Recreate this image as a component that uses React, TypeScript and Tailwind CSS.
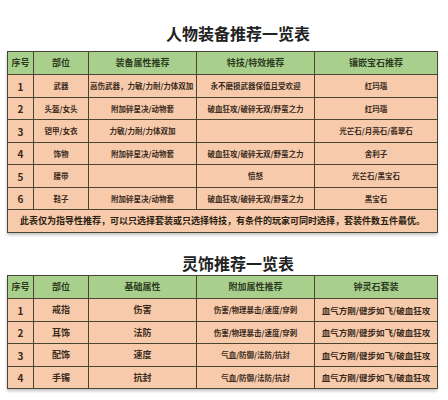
const font = { fontFamily: '"Noto Sans CJK SC", "Microsoft YaHei", sans-serif' };

type Cell = { text: string; left?: boolean };

const gear: Cell[][] = [
  [{ text: "1" }, { text: "武器" }, { text: "高伤武器，力敏/力耐/力体双加", left: true }, { text: "永不磨损武器保值且受欢迎" }, { text: "红玛瑙" }],
  [{ text: "2" }, { text: "头盔/女头" }, { text: "附加碎星决/动物套" }, { text: "破血狂攻/破碎无双/野蛮之力" }, { text: "红玛瑙" }],
  [{ text: "3" }, { text: "铠甲/女衣" }, { text: "力敏/力耐/力体双加" }, { text: "" }, { text: "光芒石/月亮石/翡翠石" }],
  [{ text: "4" }, { text: "饰物" }, { text: "附加碎星决/动物套" }, { text: "破血狂攻/破碎无双/野蛮之力" }, { text: "舍利子" }],
  [{ text: "5" }, { text: "腰带" }, { text: "" }, { text: "愤怒" }, { text: "光芒石/黑宝石" }],
  [{ text: "6" }, { text: "鞋子" }, { text: "附加碎星决/动物套" }, { text: "破血狂攻/破碎无双/野蛮之力" }, { text: "黑宝石" }],
];

const ling: string[][] = [
  ["1", "戒指", "伤害", "伤害/物理暴击/速度/穿刺", "血气方刚/健步如飞/破血狂攻"],
  ["2", "耳饰", "法防", "伤害/物理暴击/速度/穿刺", "血气方刚/健步如飞/破血狂攻"],
  ["3", "配饰", "速度", "气血/防御/法防/抗封", "血气方刚/健步如飞/破血狂攻"],
  ["4", "手镯", "抗封", "气血/防御/法防/抗封", "血气方刚/健步如飞/破血狂攻"],
];

function Cols() {
  return (
    <colgroup>
      <col className="w-[26px]" />
      <col className="w-[55px]" />
      <col className="w-[108px]" />
      <col className="w-[118px]" />
      <col className="w-[123px]" />
    </colgroup>
  );
}

function Head({ labels }: { labels: string[] }) {
  return (
    <tr className="h-[23px] bg-[#a8d08c]">
      {labels.map((l) => (
        <th key={l} className="border border-[#4a4433] text-[9px] font-bold text-[#2e3a22] text-center p-0 whitespace-nowrap">
          {l}
        </th>
      ))}
    </tr>
  );
}

export default function App() {
  return (
    <div className="w-[448px] h-[400px] bg-white overflow-hidden" style={font}>
      <h1 className="pt-[22px] h-[45px] leading-[23px] text-[16px] font-bold text-[#222] text-center pl-[28px]">
        人物装备推荐一览表
      </h1>
      <div className="mt-[6px] ml-[7px] w-[430px] shadow-[0_2px_3px_rgba(0,0,0,0.25)]">
        <table className="w-[430px] table-fixed border-collapse border border-[#6b6458]">
          <Cols />
          <thead>
            <Head labels={["序号", "部位", "装备属性推荐", "特技/特效推荐", "镶嵌宝石推荐"]} />
          </thead>
          <tbody className="bg-[#f6caab] text-[#3b2a1c]">
            {gear.map((row, i) => (
              <tr key={i} className={i % 2 === 0 ? "h-[23px]" : "h-[22px]"}>
                {row.map((c, j) => (
                  <td
                    key={j}
                    className={`border border-[#4a4433] p-0 whitespace-nowrap overflow-hidden ${
                      j === 0 ? "text-[10px] font-bold text-center" : c.left ? "text-[7.5px] font-bold text-left pl-[1px]" : "text-[7.5px] font-bold text-center"
                    }`}
                  >
                    {c.text}
                  </td>
                ))}
              </tr>
            ))}
            <tr className="h-[23px]">
              <td colSpan={5} className="border border-[#4a4433] p-0 text-center text-[9px] font-bold text-[#2b1d10] whitespace-nowrap">
                此表仅为指导性推荐，可以只选择套装或只选择特技，有条件的玩家可同时选择，套装件数五件最优。
              </td>
            </tr>
          </tbody>
        </table>
      </div>
      <h2 className="mt-[19px] h-[23px] leading-[23px] text-[16px] font-bold text-[#222] text-center pl-[28px]">
        灵饰推荐一览表
      </h2>
      <div className="ml-[7px] w-[430px] shadow-[0_2px_3px_rgba(0,0,0,0.25)]">
        <table className="w-[430px] table-fixed border-collapse border border-[#6b6458]">
          <Cols />
          <thead>
            <Head labels={["序号", "部位", "基础属性", "附加属性推荐", "钟灵石套装"]} />
          </thead>
          <tbody className="bg-[#f6caab] text-[#3b2a1c]">
            {ling.map((row, i) => (
              <tr key={i} className={i % 2 === 0 ? "h-[23px]" : "h-[22px]"}>
                {row.map((t, j) => (
                  <td
                    key={j}
                    className={`border border-[#4a4433] p-0 text-center whitespace-nowrap overflow-hidden font-bold ${
                      j === 0 ? "text-[10px]" : j < 3 ? "text-[9px]" : j === 3 ? "text-[7.5px]" : "text-[8.5px]"
                    }`}
                  >
                    {t}
                  </td>
                ))}
              </tr>
            ))}
          </tbody>
        </table>
      </div>
    </div>
  );
}
